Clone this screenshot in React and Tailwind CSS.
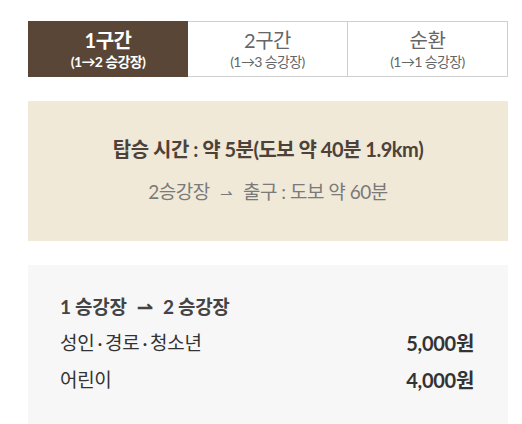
export default function App() {
  const tabs = [
    { title: "1구간", sub: "(1→2 승강장)" },
    { title: "2구간", sub: "(1→3 승강장)" },
    { title: "순환", sub: "(1→1 승강장)" },
  ];
  const active = 0;

  return (
    <div
      className="bg-white h-[424px] overflow-hidden px-[28px] pt-[21px] text-[#333]"
      style={{ fontFamily: "Lato, 'Noto Sans CJK KR', sans-serif" }}
    >
      {/* Tabs */}
      <div className="grid grid-cols-3 w-[480px] h-[56px]">
        {tabs.map((tab, i) => (
          <div
            key={tab.title}
            className={
              i === active
                ? "flex flex-col items-center justify-center bg-[#5a4636] text-white"
                : "flex flex-col items-center justify-center bg-white text-[#666] border border-[#cfcfcf] border-l-0 first:border-l"
            }
          >
            <span className={`text-[20px] leading-[23px] tracking-[-0.5px] ${i === active ? "font-bold" : ""}`}>
              {tab.title}
            </span>
            <span className={`text-[14px] leading-[17px] mt-[1px] tracking-[-0.6px] ${i === active ? "font-bold" : ""}`}>
              {tab.sub}
            </span>
          </div>
        ))}
      </div>

      {/* Info box */}
      <div className="mt-[24px] w-[480px] h-[140px] bg-[#f0e9d8] flex flex-col items-center justify-center">
        <p className="text-[20px] font-bold text-[#4d4239] leading-[24px] tracking-[-0.5px]">
          탑승 시간 : 약 5분(도보 약 40분 1.9km)
        </p>
        <p className="mt-[19px] text-[19px] text-[#7a7a7a] leading-[24px] tracking-[-0.5px]">
          2승강장 <span className="mx-[6px] text-[15px]">⇀</span> 출구 : 도보 약 60분
        </p>
      </div>

      {/* Price box */}
      <div className="mt-[24px] w-[480px] h-[170px] bg-[#f7f7f7] px-[32px] pt-[30px]">
        <p className="text-[19px] font-bold text-[#444] leading-[24px] tracking-[-0.3px]">
          1 승강장 <span className="mx-[6px]">⇀</span> 2 승강장
        </p>
        <div className="mt-[12px] flex justify-between items-center pr-[2px] text-[19px] leading-[24px] text-[#333] tracking-[-0.3px]">
          <span>
            성인<span className="mx-[3px]">·</span>경로<span className="mx-[3px]">·</span>청소년
          </span>
          <span className="font-bold text-[20px]">5,000원</span>
        </div>
        <div className="mt-[13px] flex justify-between items-center pr-[2px] text-[19px] leading-[24px] text-[#333] tracking-[-0.3px]">
          <span>어린이</span>
          <span className="font-bold text-[20px]">4,000원</span>
        </div>
      </div>
    </div>
  );
}
